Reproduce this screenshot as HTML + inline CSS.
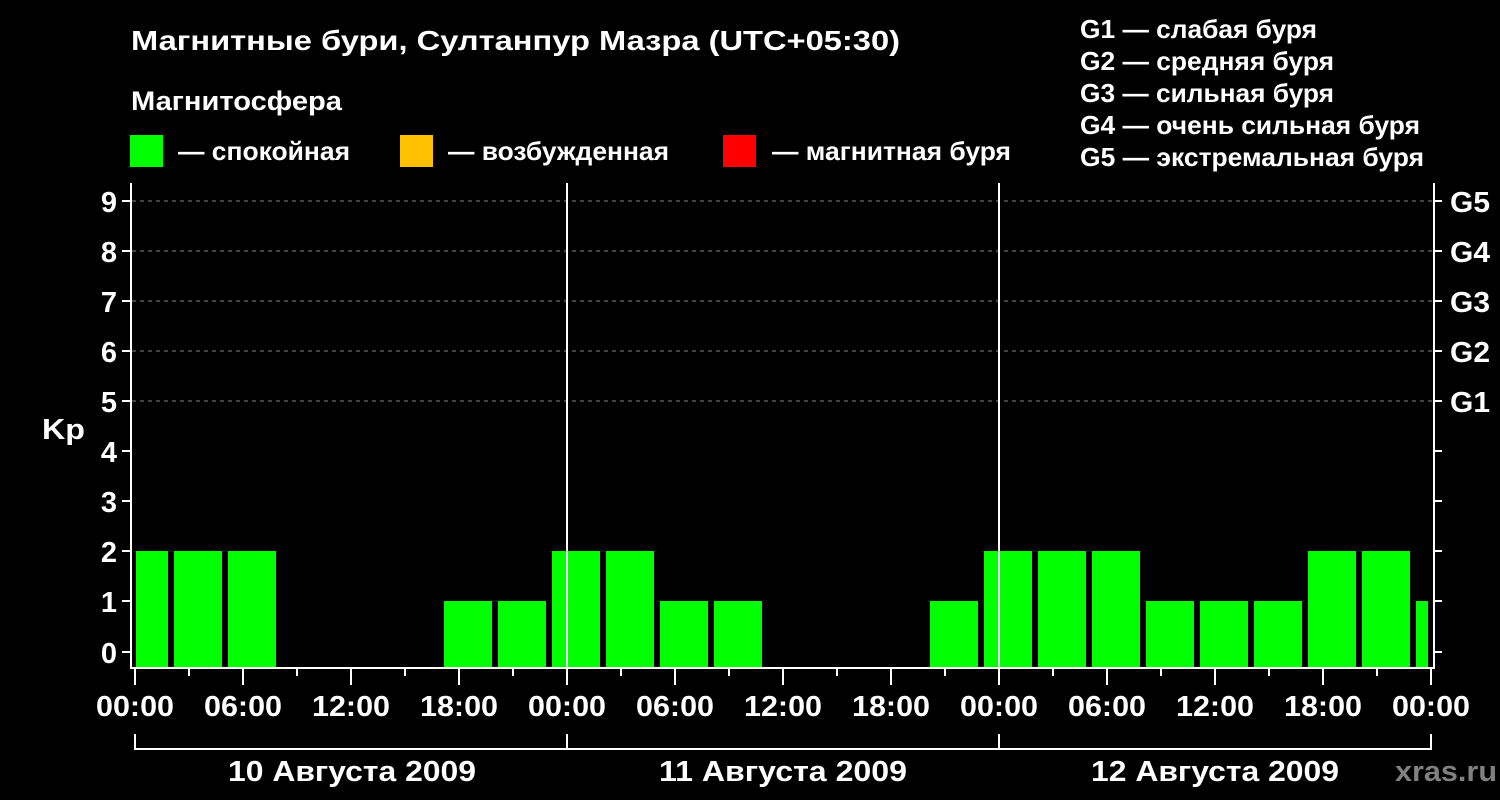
<!DOCTYPE html>
<html><head><meta charset="utf-8"><style>html,body{margin:0;padding:0;background:#000;}svg{display:block}</style></head>
<body>
<svg width="1500" height="800" xmlns="http://www.w3.org/2000/svg" font-family="Liberation Sans, sans-serif" font-weight="bold" fill="#fff">
<rect width="1500" height="800" fill="#000"/>
<text x="131" y="50" font-size="28" textLength="769" lengthAdjust="spacingAndGlyphs">Магнитные бури, Султанпур Мазра (UTC+05:30)</text>
<text x="131" y="110" font-size="27" textLength="211" lengthAdjust="spacingAndGlyphs">Магнитосфера</text>
<rect x="130" y="135" width="33" height="32" fill="#00ff00"/>
<text x="178" y="160" font-size="26" textLength="172" lengthAdjust="spacingAndGlyphs">— спокойная</text>
<rect x="400" y="135" width="33" height="32" fill="#ffc000"/>
<text x="448" y="160" font-size="26" textLength="221" lengthAdjust="spacingAndGlyphs">— возбужденная</text>
<rect x="723" y="135" width="33" height="32" fill="#ff0000"/>
<text x="772" y="160" font-size="26" textLength="239" lengthAdjust="spacingAndGlyphs">— магнитная буря</text>
<g font-size="26">
<text x="1080" y="38" textLength="237" lengthAdjust="spacingAndGlyphs">G1 — слабая буря</text>
<text x="1080" y="70" textLength="254" lengthAdjust="spacingAndGlyphs">G2 — средняя буря</text>
<text x="1080" y="102" textLength="254" lengthAdjust="spacingAndGlyphs">G3 — сильная буря</text>
<text x="1080" y="134" textLength="340" lengthAdjust="spacingAndGlyphs">G4 — очень сильная буря</text>
<text x="1080" y="166" textLength="344" lengthAdjust="spacingAndGlyphs">G5 — экстремальная буря</text>
</g>
<g stroke="#888" stroke-width="1" stroke-dasharray="4,4">
<line x1="132" y1="201" x2="1434" y2="201"/><line x1="132" y1="251" x2="1434" y2="251"/><line x1="132" y1="301" x2="1434" y2="301"/><line x1="132" y1="351" x2="1434" y2="351"/><line x1="132" y1="401" x2="1434" y2="401"/>
</g>
<g fill="#00ff00">
<rect x="136" y="551" width="32" height="117"/>
<rect x="174" y="551" width="48" height="117"/>
<rect x="228" y="551" width="48" height="117"/>
<rect x="444" y="601" width="48" height="67"/>
<rect x="498" y="601" width="48" height="67"/>
<rect x="552" y="551" width="48" height="117"/>
<rect x="606" y="551" width="48" height="117"/>
<rect x="660" y="601" width="48" height="67"/>
<rect x="714" y="601" width="48" height="67"/>
<rect x="930" y="601" width="48" height="67"/>
<rect x="984" y="551" width="48" height="117"/>
<rect x="1038" y="551" width="48" height="117"/>
<rect x="1092" y="551" width="48" height="117"/>
<rect x="1146" y="601" width="48" height="67"/>
<rect x="1200" y="601" width="48" height="67"/>
<rect x="1254" y="601" width="48" height="67"/>
<rect x="1308" y="551" width="48" height="117"/>
<rect x="1362" y="551" width="48" height="117"/>
<rect x="1416" y="601" width="12" height="67"/>
</g>
<g stroke="#fff" stroke-width="2" fill="none">
<line x1="131" y1="183" x2="131" y2="669"/>
<line x1="1434" y1="183" x2="1434" y2="669"/>
<line x1="130" y1="668" x2="1435" y2="668"/>
<line x1="567" y1="183" x2="567" y2="668"/>
<line x1="999" y1="183" x2="999" y2="668"/>
<path d="M122 201H131M122 251H131M122 301H131M122 351H131M122 401H131M122 451H131M122 501H131M122 551H131M122 601H131M122 652H131"/>
<path d="M1434 201H1442M1434 251H1442M1434 301H1442M1434 351H1442M1434 401H1442M1434 451H1442M1434 501H1442M1434 551H1442M1434 601H1442M1434 652H1442"/>
<path d="M135 668V685M189 668V676M243 668V685M297 668V676M351 668V685M405 668V676M459 668V685M513 668V676M567 668V685M621 668V676M675 668V685M729 668V676M783 668V685M837 668V676M891 668V685M945 668V676M999 668V685M1053 668V676M1107 668V685M1161 668V676M1215 668V685M1269 668V676M1323 668V685M1377 668V676M1431 668V685"/>
<path d="M135 734V749H1431V734M567 734V749M999 734V749"/>
</g>
<g font-size="29" text-anchor="end">
<text x="117" y="212">9</text><text x="117" y="262">8</text><text x="117" y="312">7</text><text x="117" y="362">6</text><text x="117" y="412">5</text><text x="117" y="462">4</text><text x="117" y="512">3</text><text x="117" y="562">2</text><text x="117" y="612">1</text><text x="117" y="663">0</text>
</g>
<text x="42" y="439" font-size="29" textLength="43" lengthAdjust="spacingAndGlyphs">Kp</text>
<g font-size="29">
<text x="1450" y="212" textLength="40" lengthAdjust="spacingAndGlyphs">G5</text><text x="1450" y="262" textLength="40" lengthAdjust="spacingAndGlyphs">G4</text><text x="1450" y="312" textLength="40" lengthAdjust="spacingAndGlyphs">G3</text><text x="1450" y="362" textLength="40" lengthAdjust="spacingAndGlyphs">G2</text><text x="1450" y="412" textLength="40" lengthAdjust="spacingAndGlyphs">G1</text>
</g>
<g font-size="29" text-anchor="middle">
<text x="135" y="716" textLength="78" lengthAdjust="spacingAndGlyphs">00:00</text><text x="243" y="716" textLength="78" lengthAdjust="spacingAndGlyphs">06:00</text><text x="351" y="716" textLength="78" lengthAdjust="spacingAndGlyphs">12:00</text><text x="459" y="716" textLength="78" lengthAdjust="spacingAndGlyphs">18:00</text>
<text x="567" y="716" textLength="78" lengthAdjust="spacingAndGlyphs">00:00</text><text x="675" y="716" textLength="78" lengthAdjust="spacingAndGlyphs">06:00</text><text x="783" y="716" textLength="78" lengthAdjust="spacingAndGlyphs">12:00</text><text x="891" y="716" textLength="78" lengthAdjust="spacingAndGlyphs">18:00</text>
<text x="999" y="716" textLength="78" lengthAdjust="spacingAndGlyphs">00:00</text><text x="1107" y="716" textLength="78" lengthAdjust="spacingAndGlyphs">06:00</text><text x="1215" y="716" textLength="78" lengthAdjust="spacingAndGlyphs">12:00</text><text x="1323" y="716" textLength="78" lengthAdjust="spacingAndGlyphs">18:00</text>
<text x="1431" y="716" textLength="78" lengthAdjust="spacingAndGlyphs">00:00</text>
<text x="352" y="781" textLength="248" lengthAdjust="spacingAndGlyphs">10 Августа 2009</text>
<text x="783" y="781" textLength="248" lengthAdjust="spacingAndGlyphs">11 Августа 2009</text>
<text x="1215" y="781" textLength="248" lengthAdjust="spacingAndGlyphs">12 Августа 2009</text>
</g>
<text x="1395" y="781" font-size="29" fill="#808080" textLength="102" lengthAdjust="spacingAndGlyphs">xras.ru</text>
</svg>
</body></html>
